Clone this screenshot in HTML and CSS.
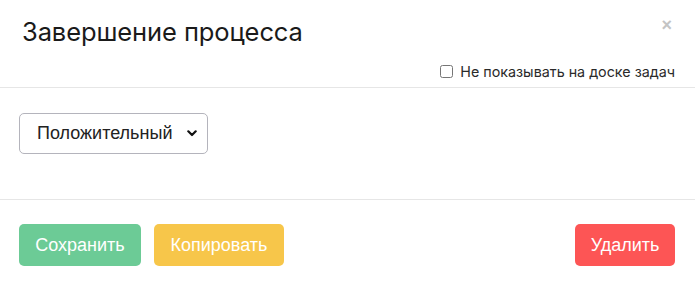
FILE: index.html
```html
<!DOCTYPE html>
<html lang="ru">
<head>
<meta charset="utf-8">
<link rel="stylesheet" href="styles.css">
</head>
<body>
<div class="modal">
  <div class="modal-header">
    <div class="title-row">
      <h1 class="title">Завершение процесса</h1>
      <button class="close" type="button">×</button>
    </div>
    <label class="hide-opt"><input type="checkbox" class="cb"><span>Не показывать на доске задач</span></label>
  </div>
  <div class="modal-body">
    <div class="select">
      <span class="select-text">Положительный</span>
      <svg class="chev" width="10" height="7" viewBox="0 0 10 7"><path d="M1.3 1.3 L5 5 L8.7 1.3" fill="none" stroke="#111" stroke-width="2.2" stroke-linecap="round" stroke-linejoin="round"/></svg>
    </div>
  </div>
  <div class="modal-footer">
    <button class="btn btn-green" type="button">Сохранить</button>
    <button class="btn btn-yellow" type="button">Копировать</button>
    <button class="btn btn-red push" type="button">Удалить</button>
  </div>
</div>
</body>
</html>
```

FILE: styles.css
```css
html, body {
  margin: 0;
  padding: 0;
  background: #fff;
}
.modal {
  width: 695px;
  height: 283px;
  font-family: Inter, "Noto Sans", sans-serif;
  color: #1b1b1b;
}
.modal-header {
  height: 88px;
  box-sizing: border-box;
  border-bottom: 1px solid #e6e6e6;
  padding: 0 20px 0 22px;
}
.title-row {
  display: flex;
  align-items: flex-start;
  justify-content: space-between;
  height: 56px;
}
.title {
  margin: 0;
  padding-top: 16px;
  font-size: 25.5px;
  font-weight: 400;
  line-height: 32px;
  letter-spacing: -0.1px;
  color: #1a1a1a;
}
.close {
  border: 0;
  background: none;
  padding: 0;
  margin-top: 15px;
  margin-right: 3px;
  font-family: "Liberation Sans", sans-serif;
  font-size: 18px;
  line-height: 20px;
  color: #c4c4c4;
  font-weight: 700;
}
.hide-opt {
  display: flex;
  justify-content: flex-end;
  align-items: center;
  gap: 7px;
  font-size: 14.3px;
  color: #2a2a2a;
  height: 30px;
}
.cb {
  margin: 0;
  width: 13px;
  height: 13px;
}
.modal-body {
  height: 112px;
  box-sizing: border-box;
  border-bottom: 1px solid #e6e6e6;
  padding: 25px 19px 0;
}
.select {
  width: 189px;
  height: 41px;
  box-sizing: border-box;
  border: 1px solid #b4b4bc;
  border-radius: 5px;
  display: flex;
  align-items: center;
  justify-content: space-between;
  padding: 0 10px 0 17px;
  font-family: "Liberation Sans", Arial, sans-serif;
  font-size: 18px;
  color: #222;
}
.chev {
  display: block;
}
.modal-footer {
  display: flex;
  align-items: flex-start;
  gap: 13px;
  padding: 24px 20px 0 19px;
}
.btn {
  height: 42px;
  border: 0;
  border-radius: 5px;
  color: #fff;
  font-family: "Liberation Sans", Arial, sans-serif;
  font-size: 18px;
  padding: 0;
  line-height: 42px;
}
.btn-green { background: #6ccb96; width: 122px; }
.btn-yellow { background: #f7c64a; width: 130px; }
.btn-red { background: #fd5555; width: 100px; }
.push { margin-left: auto; }
```
